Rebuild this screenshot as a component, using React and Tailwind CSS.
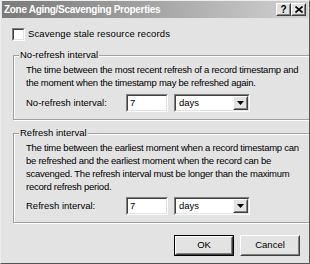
import React from "react";

const font = { fontFamily: '"Liberation Sans", Arial, sans-serif' };

function Raised({ children, className = "" }) {
  return (
    <div className={"shrink-0 border border-t-white border-l-white border-b-[#404040] border-r-[#404040] " + className}>
      <div className="w-full h-full border border-t-[#e3e3e3] border-l-[#e3e3e3] border-b-[#808080] border-r-[#808080] flex items-center justify-center bg-[#e3e3e3]">
        {children}
      </div>
    </div>
  );
}

function Sunken({ children, className = "" }) {
  return (
    <div className={"shrink-0 border border-t-[#808080] border-l-[#808080] border-b-white border-r-white " + className}>
      <div className="w-full h-full border border-t-[#404040] border-l-[#404040] border-b-[#e3e3e3] border-r-[#e3e3e3] bg-white flex items-center">
        {children}
      </div>
    </div>
  );
}

function Row({ label }) {
  return (
    <div className="flex items-center h-[18px]">
      <div className="w-[100px] text-[9.5px] text-black">{label}</div>
      <Sunken className="w-[42px] h-[18px]">
        <span className="text-[9.5px] text-black pl-[2px] leading-none">7</span>
      </Sunken>
      <Sunken className="w-[76px] h-[18px] ml-[6px]">
        <span className="flex-1 text-[9.5px] text-black pl-[3px] leading-none">days</span>
        <Raised className="w-[15px] h-[14px]">
          <svg width="7" height="4" viewBox="0 0 7 4">
            <polygon points="0,0 7,0 3.5,4" fill="#000" />
          </svg>
        </Raised>
      </Sunken>
    </div>
  );
}

function Group({ title, lines, label, className = "", rowTop = "mt-[4px]" }) {
  return (
    <fieldset className={"border border-[#a0a0a0] shadow-[inset_1px_1px_0_#ffffff,1px_1px_0_#ffffff] mx-[12px] px-[12px] " + className}>
      <legend className="text-[9.5px] text-black px-[1px] ml-[-7px] leading-[12px] bg-[#e3e3e3]">{title}</legend>
      <div className="text-[9.5px] tracking-[-0.25px] text-black leading-[13px] mt-[2px]">
        {lines.map((l, i) => (
          <div key={i} className="whitespace-nowrap">{l}</div>
        ))}
      </div>
      <div className={rowTop + " mb-[7px]"}>
        <Row label={label} />
      </div>
    </fieldset>
  );
}

export default function App() {
  return (
    <div style={font} className="w-[310px] h-[264px] bg-[#e3e3e3] border border-t-[#eeeeee] border-l-[#eeeeee] border-r-[#555555] border-b-[#555555] flex flex-col overflow-hidden">
      <div className="h-[17px] mx-[1px] bg-gradient-to-r from-[#7a7a7a] to-[#d2d2d2] flex items-center pl-[2px] pr-[2px]">
        <span className="flex-1 text-white font-bold text-[10px] tracking-[-0.3px] leading-none whitespace-nowrap">Zone Aging/Scavenging Properties</span>
        <Raised className="w-[15px] h-[13px]">
          <span className="text-[10px] font-bold text-black leading-none">?</span>
        </Raised>
        <Raised className="w-[15px] h-[13px]">
          <svg width="8" height="7" viewBox="0 0 8 7">
            <path d="M0.5 0.5 L7.5 6.5 M7.5 0.5 L0.5 6.5" stroke="#000" strokeWidth="1.6" />
          </svg>
        </Raised>
      </div>
      <div className="flex items-center mt-[10px] ml-[11px] h-[13px]">
        <Sunken className="w-[13px] h-[13px]"><span /></Sunken>
        <span className="ml-[3px] text-[9.5px] tracking-[0.1px] text-black">Scavenge stale resource records</span>
      </div>
      <Group
        className="mt-[8px]"
        title="No-refresh interval"
        lines={[
          "The time between the most recent refresh of a record timestamp and",
          "the moment when the timestamp may be refreshed again.",
        ]}
        label="No-refresh interval:"
        rowTop="mt-[5px]"
      />
      <Group
        className="mt-[7px]"
        title="Refresh interval"
        lines={[
          "The time between the earliest moment when a record timestamp can",
          "be refreshed and the earliest moment when the record can be",
          "scavenged. The refresh interval must be longer than the maximum",
          "record refresh period.",
        ]}
        label="Refresh interval:"
        rowTop="mt-[4px]"
      />
      <div className="flex justify-end mt-[12px] mr-[9px] gap-[6px]">
        <div className="shrink-0 border border-black">
          <Raised className="w-[58px] h-[19px]">
            <span className="text-[9.5px] text-black">OK</span>
          </Raised>
        </div>
        <Raised className="w-[60px] h-[21px]">
          <span className="text-[9.5px] text-black">Cancel</span>
        </Raised>
      </div>
    </div>
  );
}
